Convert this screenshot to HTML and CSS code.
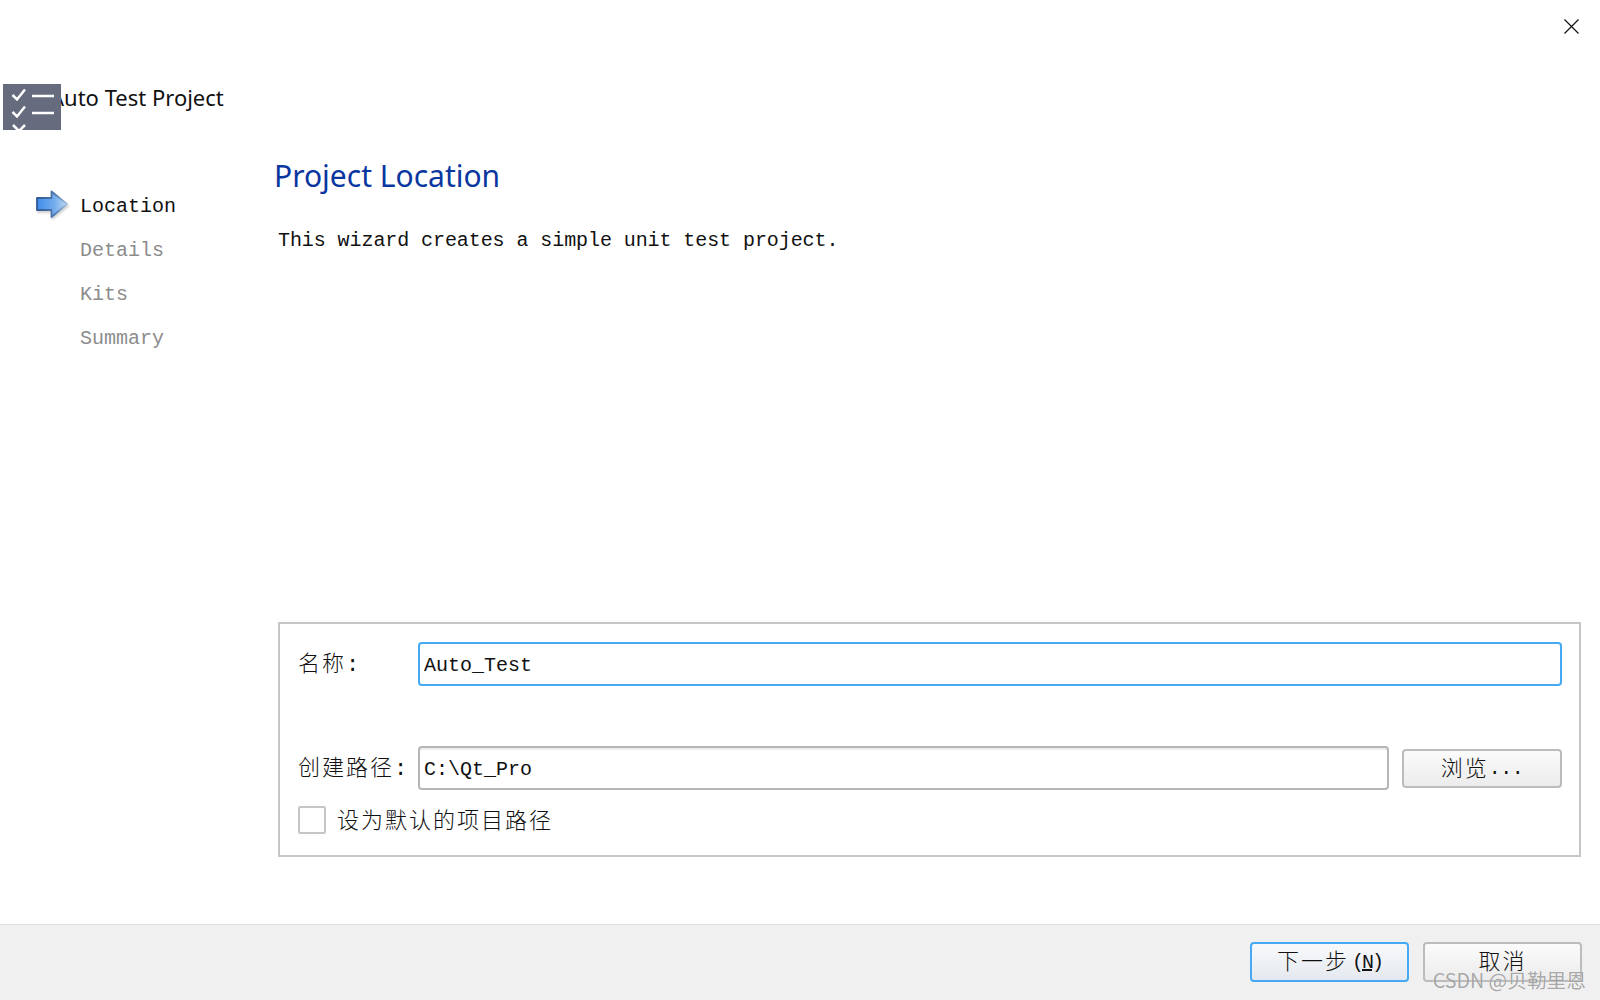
FILE: index.html
```html
<!DOCTYPE html>
<html lang="zh-CN">
<head>
<meta charset="utf-8">
<title>Auto Test Project</title>
<link rel="stylesheet" href="styles.css">
</head>
<body>
<div class="wizard">
  <div class="top-bar">
    <svg class="close-icon" width="15" height="15" viewBox="0 0 15 15"><path d="M0.5 0.5L14.5 14.5M14.500 0.5L0.5 14.5" stroke="#111" stroke-width="1.2" fill="none"/></svg>
  </div>
  <div class="banner">
    <svg class="logo" width="58" height="46" viewBox="0 0 58 46">
      <rect width="58" height="46" fill="#666c7e"/>
      <path d="M9.500 11L14 15.500L22 5.500M9.500 28L14 32.500L22 22.500M10 41L16 47L22 41" stroke="#fff" stroke-width="2.500" fill="none"/>
      <path d="M29 12H51M29 29H51" stroke="#fff" stroke-width="2.500" fill="none"/>
    </svg>
    <span class="banner-title">Auto Test Project</span>
  </div>
  <div class="content">
    <nav class="steps">
      <div class="step step-current">
        <svg class="step-arrow" width="34" height="32" viewBox="0 0 34 32">
          <defs>
            <linearGradient id="arrowFill" x1="0" x2="1" y1="0" y2="0"><stop offset="0" stop-color="#3f8de8"/><stop offset="0.6" stop-color="#76aeee"/><stop offset="1" stop-color="#c6dcf3"/></linearGradient>
            <linearGradient id="arrowEdge" x1="0" x2="1" y1="0" y2="0"><stop offset="0" stop-color="#2f5a96"/><stop offset="0.6" stop-color="#4f78ae"/><stop offset="1" stop-color="#a9c4e0"/></linearGradient>
          </defs>
          <path d="M1 8H15.500V1.500L31 14L15.500 27V20H1Z" fill="url(#arrowFill)" stroke="url(#arrowEdge)" stroke-width="1.800" stroke-linejoin="round"/>
        </svg>
        <span>Location</span>
      </div>
      <div class="step">Details</div>
      <div class="step">Kits</div>
      <div class="step">Summary</div>
    </nav>
    <main class="page">
      <h1 class="page-title">Project Location</h1>
      <p class="page-desc">This wizard creates a simple unit test project.</p>
      <section class="form-box">
        <div class="field-row">
          <span class="field-label cjk cjk-lift">名称:</span>
          <div class="text-input text-input-focus">Auto_Test</div>
        </div>
        <div class="field-row field-row-path">
          <span class="field-label cjk cjk-lift">创建路径:</span>
          <div class="text-input text-input-path">C:\Qt_Pro</div>
          <div class="btn btn-browse"><span class="cjk cjk-browse">浏览</span><span class="dots">...</span></div>
        </div>
        <div class="field-row field-row-check">
          <span class="checkbox"></span>
          <span class="cjk cjk-check">设为默认的项目路径</span>
        </div>
      </section>
    </main>
  </div>
  <footer class="footer">
    <div class="btn btn-footer btn-default"><span class="cjk cjk-drop">下一步</span><span class="accel">(<u>N</u>)</span></div>
    <div class="btn btn-footer"><span class="cjk cjk-drop">取消</span></div>
    <span class="watermark">CSDN @贝勒里恩</span>
  </footer>
</div>
</body>
</html>
```
FILE: styles.css
```css
* { box-sizing: border-box; }
html, body { margin: 0; padding: 0; background: #fff; }
body {
  font-family: "Liberation Mono", "Noto Sans CJK SC", monospace;
  font-size: 20px;
  color: #111;
}
.wizard { position: relative; width: 1600px; height: 1000px; display: flex; flex-direction: column; overflow: hidden; }
.top-bar { height: 84px; display: flex; justify-content: flex-end; padding: 19px 21px 0 0; flex: none; }
.close-icon { display: block; }
.banner { height: 46px; flex: none; display: flex; align-items: flex-start; padding-left: 3px; }
.logo { position: relative; z-index: 1; flex: none; display: block; }
.banner-title {
  font-family: "Noto Sans", sans-serif;
  font-size: 22px;
  line-height: 26px;
  margin-left: -11px;
  color: #111;
}
.content { flex: 1; display: flex; min-height: 0; }
.steps { width: 278px; flex: none; padding: 55px 0 0 80px; position: relative; }
.step { height: 44px; line-height: 44px; color: #8c8c8c; }
.step-current { color: #111; position: relative; }
.step-arrow { position: absolute; left: -44px; top: 5px; filter: drop-shadow(1px 2px 1px rgba(0, 0, 0, 0.18)); }
.page { flex: 1; display: flex; flex-direction: column; padding: 0 19px 67px 0; min-width: 0; }
.page-title {
  font-family: "Noto Sans", sans-serif;
  font-weight: 400;
  font-size: 30px;
  line-height: 44px;
  margin: 24px 0 0 -4px;
  color: #0a36a0;
}
.page-desc { margin: 28px 0 0; line-height: 30px; letter-spacing: -0.08px; }
.form-box {
  margin-top: auto;
  height: 235px;
  border: 2px solid #c6c6c6;
  padding: 18px 17px 18px 18px;
}
.field-row { display: flex; align-items: center; }
.field-row-path { margin-top: 60px; }
.field-row-check { margin-top: 12px; }
.field-label { width: 120px; flex: none; }
.cjk {
  font-family: "Liberation Mono", "Noto Sans CJK SC", sans-serif;
  font-size: 22px;
  letter-spacing: 2px;
  font-weight: 300;
}
.cjk-lift { padding-bottom: 5px; }
.cjk-browse { padding-top: 5px; }
.cjk-check { padding-bottom: 3px; }
.cjk-drop { padding-top: 3px; }
.text-input {
  flex: 1;
  height: 44px;
  border: 2px solid #b6b6b6;
  border-radius: 4px;
  padding-left: 4px;
  line-height: 44px;
  background: #fff;
}
.text-input-focus { border-color: #45a9f5; }
.text-input-path { box-shadow: inset 0 2px 0 #eeeeee; }
.btn {
  height: 39px;
  width: 160px;
  flex: none;
  border: 2px solid #bcbcbc;
  border-radius: 4px;
  background: linear-gradient(#fbfbfb, #ececec);
  display: flex;
  align-items: center;
  justify-content: center;
  line-height: 35px;
}
.btn-browse { margin-left: 13px; }
.dots { letter-spacing: -0.5px; }
.checkbox { width: 28px; height: 28px; border: 2px solid #c6c6c6; border-radius: 2px; margin-right: 11px; flex: none; }
.footer {
  position: relative;
  height: 76px;
  flex: none;
  background: #f0f0f0;
  border-top: 1px solid #dfdfdf;
  display: flex;
  justify-content: flex-end;
  gap: 14px;
  padding: 17px 18px 0 0;
}
.btn-footer { width: 159px; height: 40px; }
.btn-default { border-color: #45a9f5; background: linear-gradient(#f8f9fb, #e4e9ef); }
.accel { letter-spacing: -2px; margin-left: 3px; }
.watermark {
  position: absolute;
  right: 14px;
  bottom: 8px;
  font-family: "Noto Sans CJK SC", sans-serif;
  font-size: 19.700px;
  line-height: 24px;
  color: rgba(120, 120, 120, 0.65);
  text-shadow: 0 0 1px rgba(255, 255, 255, 0.8);
  white-space: nowrap;
}
```
